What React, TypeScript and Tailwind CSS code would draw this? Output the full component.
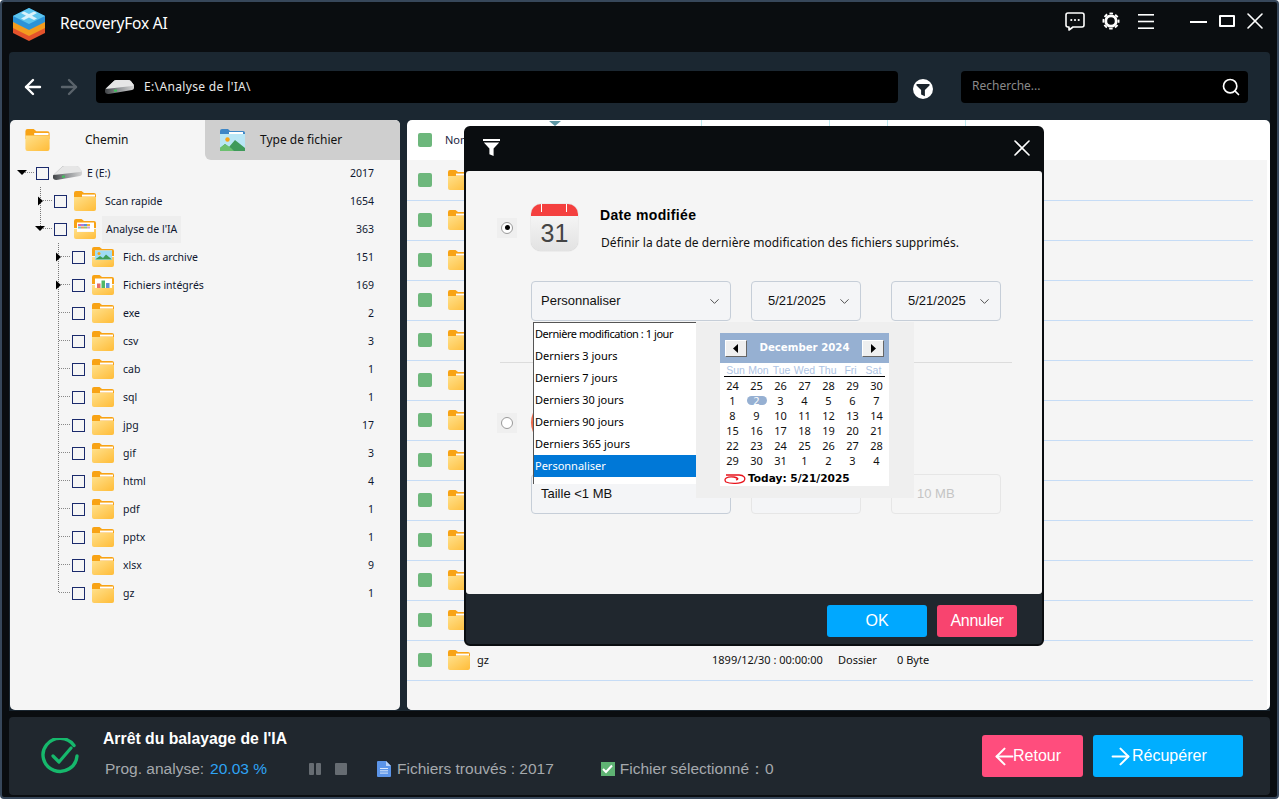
import { ArrowLeft, ArrowRight, ChevronDown, Search, X } from 'lucide-react';

type FolderKind = 'plain' | 'image' | 'chart' | 'swatch';

const treeRows: { label: string; count: number; kind?: FolderKind; depth: 0 | 1 | 2; arrow?: 'down' | 'right'; last?: boolean }[] = [
  { label: 'E (E:)', count: 2017, depth: 0, arrow: 'down' },
  { label: 'Scan rapide', count: 1654, depth: 1, arrow: 'right', kind: 'plain' },
  { label: "Analyse de l'IA", count: 363, depth: 1, arrow: 'down', kind: 'swatch', last: true },
  { label: 'Fich. ds archive', count: 151, depth: 2, arrow: 'right', kind: 'image' },
  { label: 'Fichiers intégrés', count: 169, depth: 2, arrow: 'right', kind: 'chart' },
  { label: 'exe', count: 2, depth: 2, kind: 'plain' },
  { label: 'csv', count: 3, depth: 2, kind: 'plain' },
  { label: 'cab', count: 1, depth: 2, kind: 'plain' },
  { label: 'sql', count: 1, depth: 2, kind: 'plain' },
  { label: 'jpg', count: 17, depth: 2, kind: 'plain' },
  { label: 'gif', count: 3, depth: 2, kind: 'plain' },
  { label: 'html', count: 4, depth: 2, kind: 'plain' },
  { label: 'pdf', count: 1, depth: 2, kind: 'plain' },
  { label: 'pptx', count: 1, depth: 2, kind: 'plain' },
  { label: 'xlsx', count: 9, depth: 2, kind: 'plain' },
  { label: 'gz', count: 1, depth: 2, kind: 'plain', last: true },
];

const dropdownItems = ['Derniers 3 jours', 'Derniers 7 jours', 'Derniers 30 jours', 'Derniers 90 jours', 'Derniers 365 jours'];

const calendarDays = [24, 25, 26, 27, 28, 29, 30, 1, 2, 3, 4, 5, 6, 7, 8, 9, 10, 11, 12, 13, 14, 15, 16, 17, 18, 19, 20, 21, 22, 23, 24, 25, 26, 27, 28, 29, 30, 31, 1, 2, 3, 4];

function Logo() {
  return (
    <svg width="34" height="33" viewBox="0 0 34 33">
      <path d="M1 19 L17 11 L33 19 V25 L17 33 L1 25Z" fill="#e4532b" />
      <path d="M1 14 L17 6 L33 14 V20 L17 28 L1 20Z" fill="#f39c1f" />
      <path d="M1 8 L17 0 L33 8 V14 L17 22 L1 14Z" fill="#2b93d8" />
      <path d="M1 8 L17 0 L33 8 L17 16Z" fill="#5cc4ee" />
      <path d="M9 5 L12 3.5 L17 6 L22 3.5 L25 5 L20 7.8 L25 10.5 L22 12 L17 9.5 L12 12 L9 10.5 L14 7.8Z" fill="#d9f2fb" />
    </svg>
  );
}

function Folder({ kind = 'plain', width = 22, height = 20 }: { kind?: FolderKind; width?: number; height?: number }) {
  const gradient = `folder-${kind}-${width}`;
  return (
    <svg width={width} height={height} viewBox="0 0 22 20" className="shrink-0">
      <defs>
        <linearGradient id={gradient} x1="0" y1="0" x2="1" y2="1">
          <stop offset="0" stopColor="#ffe08a" />
          <stop offset="1" stopColor="#ffbc38" />
        </linearGradient>
      </defs>
      <path d="M0 2a2 2 0 0 1 2-2h5.5l2.5 2h10a2 2 0 0 1 2 2v5H0z" fill="#f8a315" />
      {kind === 'plain' && <rect x="8" y="3.6" width="13" height="2" fill="#fff" />}
      {kind !== 'plain' && <rect x="3" y="3.5" width="17" height="9" fill="#fff" />}
      {kind === 'image' && (
        <g>
          <rect x="3" y="3.5" width="17" height="9" fill="#9fdcf5" />
          <circle cx="7" cy="6.5" r="1.5" fill="#f8a315" />
          <path d="M3 12.5 L8 9 L11 11 L14 7.5 L20 12.5Z" fill="#3f9e57" />
        </g>
      )}
      {kind === 'chart' && (
        <g>
          <rect x="5" y="8.5" width="3.5" height="5" fill="#e46a6a" />
          <rect x="9.5" y="5.5" width="3.5" height="8" fill="#4fb868" />
          <rect x="14" y="8" width="3.5" height="5.5" fill="#5d8fd8" />
        </g>
      )}
      {kind === 'swatch' && (
        <g>
          <rect x="4" y="5" width="3" height="2" fill="#e46a9a" />
          <rect x="7" y="5" width="3" height="2" fill="#a77be0" />
          <rect x="10" y="5" width="3" height="2" fill="#5d8fd8" />
          <rect x="13" y="5" width="3" height="2" fill="#f2b233" />
          <rect x="4" y="7.5" width="3" height="2" fill="#6cc3d8" />
          <rect x="7" y="7.5" width="3" height="2" fill="#e4a05a" />
          <rect x="10" y="7.5" width="3" height="2" fill="#9bc76a" />
          <rect x="13" y="7.5" width="3" height="2" fill="#c9a0dc" />
        </g>
      )}
      <path d={kind === 'plain' ? 'M0 6h22v12a2 2 0 0 1-2 2H2a2 2 0 0 1-2-2z' : 'M0 10h3v3h17v-3h2v8a2 2 0 0 1-2 2H2a2 2 0 0 1-2-2z'} fill={`url(#${gradient})`} />
    </svg>
  );
}

function PictureFolder() {
  return (
    <svg width="25" height="22" viewBox="0 0 25 22" className="shrink-0">
      <path d="M0 2a2 2 0 0 1 2-2h6l2 2h13a2 2 0 0 1 2 2v3H0z" fill="#3d86c6" />
      <rect x="9" y="3" width="14" height="2" fill="#fff" />
      <path d="M0 5h25v15a2 2 0 0 1-2 2H2a2 2 0 0 1-2-2z" fill="#b9e6f5" />
      <circle cx="7.5" cy="10.5" r="2.2" fill="#f8a315" />
      <path d="M0 22v-3l5-4 4 3 6-7 10 8v3z" fill="#3f9a5a" />
      <path d="M0 22v-3l5-4 6 4 3 3z" fill="#6cc070" />
    </svg>
  );
}

function Drive() {
  return (
    <svg width="29" height="14" viewBox="0 0 29 14" className="shrink-0">
      <defs>
        <linearGradient id="drive-front" x1="0" y1="0" x2="1" y2="0">
          <stop offset="0" stopColor="#3f4245" />
          <stop offset="0.45" stopColor="#8d9093" />
          <stop offset="1" stopColor="#d4d4d4" />
        </linearGradient>
      </defs>
      <path d="M0 9.5 L8.5 1.2 Q9.5 0 11.5 0 H23 Q25 0 26 1.2 L29 5.5 V8 Q29 9.5 27 10 L5 13.8 Q0 14.5 0 11.5Z" fill="url(#drive-front)" />
      <path d="M0.5 8.8 L8.5 1.2 Q9.5 0 11.5 0 H23 Q25 0 26 1.2 L29 5 Q28.5 5.8 27 6 L5 8.4 Q2 8.6 0.5 8.8Z" fill="#e6e6e6" />
      <rect x="9" y="9.6" width="3" height="2" fill="#3ec25a" />
    </svg>
  );
}

function ChatIcon() {
  return (
    <svg width="20" height="19" viewBox="0 0 20 19" fill="none">
      <path d="M3 1h14a2 2 0 0 1 2 2v10a2 2 0 0 1-2 2H8l-4 3v-3H3a2 2 0 0 1-2-2V3a2 2 0 0 1 2-2z" stroke="#fff" strokeWidth="1.6" strokeLinejoin="round" />
      <circle cx="6.3" cy="8" r="1.1" fill="#fff" />
      <circle cx="10" cy="8" r="1.1" fill="#fff" />
      <circle cx="13.7" cy="8" r="1.1" fill="#fff" />
    </svg>
  );
}

function GearIcon() {
  return (
    <svg width="18" height="18" viewBox="0 0 18 18" fill="none">
      <circle cx="9" cy="9" r="5.2" stroke="#fff" strokeWidth="2.8" />
      <circle cx="9" cy="9" r="7.6" stroke="#fff" strokeWidth="1.8" strokeDasharray="3.6 2.37" strokeDashoffset="1.8" />
    </svg>
  );
}

function MenuIcon() {
  return (
    <svg width="16" height="15" viewBox="0 0 16 15">
      <rect y="0" width="16" height="1.6" fill="#fff" />
      <rect y="6.7" width="16" height="1.6" fill="#fff" />
      <rect y="13.4" width="16" height="1.6" fill="#fff" />
    </svg>
  );
}

function FunnelBadge() {
  return (
    <svg width="20" height="20" viewBox="0 0 20 20">
      <circle cx="10" cy="10" r="10" fill="#fff" />
      <path d="M3.5 5h13v1.6l-4.6 4.4v6.2l-3.8-1.6v-4.6L3.5 6.6z" fill="#1a242c" />
    </svg>
  );
}

function FunnelIcon() {
  return (
    <svg width="17" height="17" viewBox="0 0 17 17">
      <rect width="17" height="2" fill="#fff" />
      <path d="M0.8 3.5h15.4l-5.6 6v7.5l-4.2-1.8V9.5z" fill="#fff" />
    </svg>
  );
}

function DoneIcon() {
  return (
    <svg width="38" height="37" viewBox="0 0 38 37" fill="none" className="shrink-0">
      <path d="M33 7.5 A17 16.5 0 1 0 36 18" stroke="#16b86c" strokeWidth="3.4" strokeLinecap="round" />
      <path d="M12 18 L18 24 L30 10" stroke="#16b86c" strokeWidth="3.2" strokeLinecap="round" strokeLinejoin="round" />
    </svg>
  );
}

function DocIcon() {
  return (
    <svg width="14" height="16" viewBox="0 0 14 16" className="shrink-0">
      <path d="M1 0h8l5 5v10a1 1 0 0 1-1 1H1a1 1 0 0 1-1-1V1a1 1 0 0 1 1-1z" fill="#5b94e8" />
      <path d="M9 0l5 5H9z" fill="#b9d2f7" />
      <path d="M3 7.5h8M3 9.8h8M3 12.1h8" stroke="#dbe8fb" strokeWidth="1" />
    </svg>
  );
}

function TodayMark() {
  return (
    <svg width="22" height="13" viewBox="0 0 22 13" fill="none" className="shrink-0">
      <path d="M2 3 H15 C20 3 22 6 20 9 C17 12 6 12 2 10 C-1 7 3 4 10 5 C14 6 15 7 12 8" stroke="#e8141c" strokeWidth="1.3" />
    </svg>
  );
}

function TreeGuide({ depth, arrow, last }: { depth: 0 | 1 | 2; arrow?: 'down' | 'right'; last?: boolean }) {
  const width = depth === 0 ? 26 : depth === 1 ? 44 : 62;
  const x = depth === 0 ? 12 : depth === 1 ? 30 : 48;
  return (
    <svg width={width} height="28" viewBox={`0 0 ${width} 28`} className="shrink-0">
      {depth > 0 && <line x1={x + 0.5} y1="0" x2={x + 0.5} y2={last ? 14 : 28} stroke="#777" strokeDasharray="1 1" />}
      <line x1={x + 1} y1="13.5" x2={width - 1} y2="13.5" stroke="#888" strokeDasharray="1 1" />
      {arrow === 'down' && <path d={`M${x - 5} 11 h10 l-5 5z`} fill="#000" />}
      {arrow === 'right' && <path d={`M${x - 2} 9.5 l5 4.5 l-5 4.5z`} fill="#000" />}
    </svg>
  );
}

function SelectBox({ label, width, disabled, pad = 'pl-[9px]' }: { label?: string; width: string; disabled?: boolean; pad?: string }) {
  return (
    <div className={`flex h-10 items-center justify-between rounded-[4px] border bg-[#f4f5f7] pr-[8px] text-[13px] text-[#111] ${width} ${pad} ${disabled ? 'border-[#e6e6e6]' : 'border-[#c6ced8]'}`}>
      <span>{label}</span>
      {!disabled && <ChevronDown size={15} strokeWidth={1.5} className="text-[#444]" />}
    </div>
  );
}

function CalendarNavButton({ dir }: { dir: 'prev' | 'next' }) {
  return (
    <div className="flex h-[17px] w-[22px] items-center justify-center border border-t-white border-r-[#666] border-b-[#666] border-l-white bg-[#efefef]">
      <svg width="6" height="9" viewBox="0 0 6 9">
        <path d={dir === 'prev' ? 'M5 0v9L0 4.5z' : 'M1 0v9l5-4.5z'} fill="#000" />
      </svg>
    </div>
  );
}

function Calendar() {
  return (
    <div className="h-[153px] w-[169px] bg-white font-['Noto_Sans',sans-serif] text-[11px] leading-none text-[#111]">
      <div className="flex h-[30px] items-center justify-between bg-[#96b0d2] px-[5px]">
        <CalendarNavButton dir="prev" />
        <span className="pt-px font-['DejaVu_Sans',sans-serif] text-[10.2px] font-bold text-white">December 2024</span>
        <CalendarNavButton dir="next" />
      </div>
      <div className="mx-[4px] grid h-[14px] grid-cols-7 items-center border-b border-black pt-px text-center font-['Liberation_Sans',sans-serif] text-[10.5px] text-[#aec4e4]">
        {['Sun', 'Mon', 'Tue', 'Wed', 'Thu', 'Fri', 'Sat'].map((d) => (
          <span key={d}>{d}</span>
        ))}
      </div>
      <div className="mx-[0.5px] grid grid-cols-7 pt-px text-center">
        {calendarDays.map((d, i) => (
          <div key={i} className="flex h-[15px] items-center justify-center">
            {i === 8 ? <span className="flex h-[9px] w-[20px] items-center justify-center rounded-full bg-[#96b0d2] text-white">{d}</span> : d}
          </div>
        ))}
      </div>
      <div className="flex h-[18px] items-center gap-[2px] pt-[2px] pl-[4px] font-['DejaVu_Sans',sans-serif] text-[10.6px] font-bold text-black">
        <TodayMark />
        <span>Today: 5/21/2025</span>
      </div>
    </div>
  );
}

function CalendarBadge() {
  return (
    <div className="relative flex h-[47px] w-[47px] flex-col overflow-hidden rounded-[10px] bg-gradient-to-b from-[#fbfbfb] to-[#e2e2e2] shadow-[0_0_1px_#999]">
      <div className="h-3 shrink-0 bg-[#f4403f]" />
      <div className="absolute top-0 left-[10px] h-2 w-px bg-white" />
      <div className="absolute top-0 left-[35px] h-2 w-px bg-white" />
      <div className="flex flex-1 items-center justify-center text-[25px] leading-none text-[#444]">31</div>
    </div>
  );
}

function FilterModal() {
  return (
    <div className="absolute top-[124px] left-[462px] flex h-[520px] w-[580px] flex-col overflow-hidden rounded-[6px] border-2 border-[#0a0d10] bg-[#0a0d10]">
      <div className="flex h-[43px] shrink-0 items-center justify-between pr-[6px] pb-[4px] pl-[17px]">
        <FunnelIcon />
        <X size={28} strokeWidth={1.4} className="text-white" />
      </div>
      <div className="relative h-[423px] shrink-0 rounded-[3px] bg-[#f5f5f5] pt-[33px] font-['Liberation_Sans',sans-serif]">
        <div className="flex">
          <div className="flex h-[47px] w-[65px] items-center justify-center pl-[17px]">
            <div className="flex h-5 w-5 items-center justify-center bg-[#efefef]">
              <div className="flex h-3 w-3 items-center justify-center rounded-full border border-[#999] bg-white">
                <div className="h-[5px] w-[5px] rounded-full bg-black" />
              </div>
            </div>
          </div>
          <CalendarBadge />
          <div className="ml-[22px] flex flex-col">
            <div className="mt-px text-[14px] leading-5 font-bold tracking-[0.35px] text-black">Date modifiée</div>
            <div className="mt-[8px] ml-px font-['Noto_Sans',sans-serif] text-[12px] leading-5 tracking-[0.05px] text-[#111]">Définir la date de dernière modification des fichiers supprimés.</div>
          </div>
        </div>
        <div className="mt-[28px] ml-[65px] flex">
          <SelectBox label="Personnaliser" width="w-[200px]" />
          <SelectBox label="5/21/2025" width="ml-[20px] w-[110px]" pad="pl-[16px]" />
          <SelectBox label="5/21/2025" width="ml-[30px] w-[110px]" pad="pl-[16px]" />
        </div>
        <div className="mt-[41px] ml-[34px] h-px w-[512px] bg-[#dcdcdc]" />
        <div className="mt-[36px] flex">
          <div className="flex h-[47px] w-[65px] items-center justify-center pl-[17px]">
            <div className="flex h-5 w-5 items-center justify-center bg-[#efefef]">
              <div className="h-3 w-3 rounded-full border border-[#999] bg-white" />
            </div>
          </div>
          <div className="h-[47px] w-[47px] rounded-full bg-[#ee6a4a]" />
        </div>
        <div className="mt-[28px] ml-[65px] flex">
          <SelectBox label="Taille <1 MB" width="w-[200px]" />
          <SelectBox width="ml-[20px] w-[110px]" disabled />
          <div className="ml-[30px] flex h-10 w-[110px] items-center rounded-[4px] border border-[#e6e6e6] pl-[25px] text-[13px] text-[#c4c4c4]">10 MB</div>
        </div>

        <div className="absolute top-[151px] left-[67px] h-[162px] w-[163px] border-t border-l border-[#555] bg-white font-['Noto_Sans',sans-serif] text-[11px] text-black">
          <div className="flex h-[22px] items-center pl-[1px] tracking-[-0.45px]">Dernière modification : 1 jour</div>
          {dropdownItems.map((item) => (
            <div key={item} className="flex h-[22px] items-center pl-[1px]">
              {item}
            </div>
          ))}
          <div className="flex h-[22px] items-center bg-[#0078d7] pl-[1px] text-white">Personnaliser</div>
        </div>
        <div className="absolute top-[151px] left-[230px] h-[176px] w-[218px] bg-[#efefef] pt-[11px] pl-[24px]">
          <Calendar />
        </div>
      </div>
      <div className="flex flex-1 items-center justify-end gap-[10px] bg-[#20272e] pt-[4px] pr-[25px] font-['Liberation_Sans',sans-serif] text-[16px] text-white">
        <button className="h-8 w-[100px] rounded-[3px] bg-[#00a8ff]">OK</button>
        <button className="h-8 w-[80px] rounded-[3px] bg-[#f8446f] tracking-[-0.3px]">Annuler</button>
      </div>
    </div>
  );
}

export default function App() {
  return (
    <div className="relative flex h-[799px] w-[1279px] flex-col overflow-hidden rounded-[4px] border-2 border-[#37475a] bg-[#0a0d10] font-['Noto_Sans',sans-serif] text-[#111]">
      <header className="flex h-[50px] shrink-0 items-center pr-[8px] pb-[6px] pl-[10px] text-white">
        <Logo />
        <span className="ml-[14px] text-[15.5px] tracking-[-0.2px]">RecoveryFox AI</span>
        <div className="mb-[6px] ml-auto flex items-center">
          <ChatIcon />
          <div className="ml-[17px]">
            <GearIcon />
          </div>
          <div className="ml-[18px]">
            <MenuIcon />
          </div>
          <div className="ml-[36px] h-[1.6px] w-[17px] translate-y-[1px] bg-white" />
          <div className="ml-[12px] h-[12px] w-[16px] rounded-[1px] border-2 border-white" />
          <X size={28} strokeWidth={1.4} className="ml-[6px]" />
        </div>
      </header>

      <div className="mx-[7px] flex min-h-0 flex-1 flex-col rounded-t-[4px] bg-[#1b2731]">
        <div className="flex h-[68px] shrink-0 items-center pt-[2px] text-white">
          <ArrowLeft size={24} strokeWidth={2.4} className="ml-[12px]" />
          <ArrowRight size={24} strokeWidth={2.4} className="ml-[12px] text-[#5a636b]" />
          <div className="ml-[15px] flex h-8 w-[802px] items-center rounded-[4px] bg-black pl-[9px]">
            <Drive />
            <span className="ml-[10px] text-[12px] tracking-[0.35px] text-[#e8e8e8]">E:\Analyse de l'IA\</span>
          </div>
          <div className="mt-[4px] ml-[15px]">
            <FunnelBadge />
          </div>
          <div className="ml-[28px] flex h-8 w-[287px] items-center justify-between rounded-[4px] bg-black pr-[7px] pl-[11px]">
            <span className="pb-[2px] text-[12px] text-[#8a8a8a]">Recherche...</span>
            <Search size={20} strokeWidth={2} />
          </div>
        </div>

        <div className="flex min-h-0 flex-1 pl-px">
          <aside className="mb-px w-[390px] overflow-hidden rounded-[5px] bg-[#f5f5f5]">
            <div className="flex h-10 text-[12px]">
              <div className="flex w-[195px] items-center pl-[15px]">
                <Folder width={25} height={22} />
                <span className="ml-[35px]">Chemin</span>
              </div>
              <div className="flex w-[195px] items-center rounded-bl-[6px] bg-[#cfcfcf] pl-[15px]">
                <PictureFolder />
                <span className="ml-[15px]">Type de fichier</span>
              </div>
            </div>
            <div className="-mt-px text-[10.5px] leading-none text-[#0f1730]">
              {treeRows.map((row) => (
                <div key={row.label} className="flex h-7 items-center pr-[26px]">
                  <TreeGuide depth={row.depth} arrow={row.arrow} last={row.last} />
                  <div className="h-[13px] w-[13px] shrink-0 border border-[#1a2a6c]" />
                  {row.kind ? (
                    <div className="ml-[7px]">
                      <Folder kind={row.kind} />
                    </div>
                  ) : (
                    <div className="ml-[4px]">
                      <Drive />
                    </div>
                  )}
                  <span className={row.kind === 'swatch' ? 'ml-[6px] flex h-[27px] items-center bg-[#eeeeee] px-[4px]' : row.kind ? 'ml-[9px]' : 'ml-[5px]'}>{row.label}</span>
                  <span className="ml-auto">{row.count}</span>
                </div>
              ))}
            </div>
          </aside>

          <section className="mb-px ml-[7px] flex-1 overflow-hidden rounded-[5px] bg-white">
            <div className="flex h-10 items-center text-[11px] text-[#1a2440]">
              <div className="relative flex h-full w-[295px] items-center border-r border-[#bdeaf0] pl-[11px]">
                <div className="h-[14px] w-[14px] rounded-[2px] bg-[#6db77c]" />
                <span className="ml-[13px]">Nom</span>
                <svg width="12" height="5" viewBox="0 0 12 5" className="absolute top-[1px] left-[142px]">
                  <path d="M0 0h12L6 5z" fill="#5d97a4" />
                </svg>
              </div>
              <div className="h-full w-[128px] border-r border-[#bdeaf0]" />
              <div className="h-full w-[58px] border-r border-[#bdeaf0]" />
              <div className="h-full w-[78px] border-r border-[#bdeaf0]" />
            </div>
            <div className="h-[550px] w-[860px] bg-[#f5f5f5] pt-px text-[11px]">
              {Array.from({ length: 13 }).map((_, i) => (
                <div key={i} className="flex h-10 w-[846px] items-center border-b border-[#c6dcf6] pb-px pl-[11px]">
                  <div className="h-[14px] w-[14px] rounded-[2px] bg-[#6db77c]" />
                  <div className="ml-[16px]">
                    <Folder />
                  </div>
                  {i === 12 && (
                    <>
                      <span className="ml-[7px] w-[235px]">gz</span>
                      <span className="w-[126px]">1899/12/30 : 00:00:00</span>
                      <span className="w-[59px]">Dossier</span>
                      <span>0 Byte</span>
                    </>
                  )}
                </div>
              ))}
            </div>
          </section>
        </div>
      </div>

      <footer className="mx-[7px] mt-[6px] mb-[2px] flex h-[78px] shrink-0 items-center rounded-[4px] bg-[#20272e] pr-[27px] pl-[32px] font-['Liberation_Sans',sans-serif] text-[15.5px] text-[#a5a9ad]">
        <DoneIcon />
        <div className="ml-[24px] flex flex-col pb-[5px]">
          <div className="text-[15.75px] leading-5 font-bold text-white">Arrêt du balayage de l'IA</div>
          <div className="mt-[10px] ml-[2px] flex h-5 items-center">
            <span>Prog. analyse:</span>
            <span className="ml-[6px] text-[#2ea4f5]">20.03 %</span>
            <div className="ml-[42px] h-3 w-[5px] rounded-[1px] bg-[#666c72]" />
            <div className="ml-[2px] h-3 w-[5px] rounded-[1px] bg-[#666c72]" />
            <div className="ml-[14px] h-3 w-3 rounded-[1px] bg-[#666c72]" />
            <div className="ml-[30px]">
              <DocIcon />
            </div>
            <span className="ml-[6px]">Fichiers trouvés : 2017</span>
            <div className="ml-[47px] flex h-[14px] w-[14px] items-center justify-center bg-[#5fb373]">
              <svg width="11" height="10" viewBox="0 0 11 10" fill="none">
                <path d="M1 5 L4 8 L10 1.5" stroke="#fff" strokeWidth="2" />
              </svg>
            </div>
            <span className="ml-[5px]">Fichier sélectionné：0</span>
          </div>
        </div>
        <div className="ml-auto flex gap-[10px] text-[16px] text-white">
          <button className="flex h-[42px] w-[101px] items-center rounded-[3px] bg-[#ff4d7d] pl-[9px]">
            <ArrowLeft size={27} strokeWidth={1.8} className="-mr-[5px]" />
            Retour
          </button>
          <button className="flex h-[42px] w-[150px] items-center rounded-[3px] bg-[#00aeff] pl-[14px]">
            <ArrowRight size={27} strokeWidth={1.8} className="-mr-[2px]" />
            Récupérer
          </button>
        </div>
      </footer>

      <FilterModal />
    </div>
  );
}
